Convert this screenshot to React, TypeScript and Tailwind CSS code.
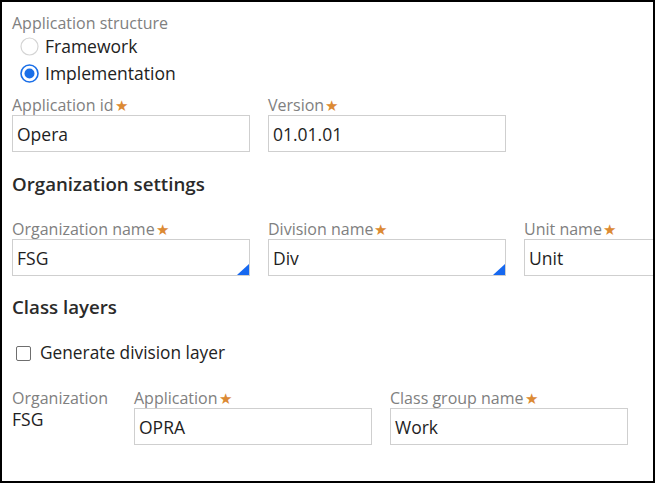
import React from "react";

const font = { fontFamily: '"Open Sans", "Noto Sans", sans-serif' };

function Label({ text, req = true }: { text: string; req?: boolean }) {
  return (
    <div className="text-[16px] leading-[20px] text-[#808080] whitespace-nowrap flex items-center pt-[1px]">
      {text}
      {req && <span className="text-[#dc8a34] text-[15px] leading-[20px] ml-[1px]">★</span>}
    </div>
  );
}

function Input({ value, tri = false }: { value: string; tri?: boolean }) {
  return (
    <div className="relative w-[238px] h-[37px] border border-[#cfcfcf] bg-white flex items-center pl-[4px] pt-[2px] text-[17.5px] text-[#1e1e1e] shrink-0">
      {value}
      {tri && (
        <svg className="absolute right-0 bottom-0" width="12" height="11" viewBox="0 0 12 11">
          <polygon points="12,0 12,11 0,11" fill="#1668f0" />
        </svg>
      )}
    </div>
  );
}

function Field({ label, value, tri = false }: { label: string; value: string; tri?: boolean }) {
  return (
    <div className="flex flex-col shrink-0">
      <Label text={label} />
      <Input value={value} tri={tri} />
    </div>
  );
}

function Radio({ checked }: { checked: boolean }) {
  return (
    <svg width="19" height="19" viewBox="0 0 19 19" className="shrink-0">
      {checked ? (
        <>
          <circle cx="9.5" cy="9.5" r="8.5" fill="white" stroke="#1a6fe8" strokeWidth="1.6" />
          <circle cx="9.5" cy="9.5" r="5" fill="#1a6fe8" />
        </>
      ) : (
        <circle cx="9.5" cy="9.5" r="8.5" fill="white" stroke="#d4d4d4" strokeWidth="1.2" />
      )}
    </svg>
  );
}

export default function App() {
  return (
    <div style={font} className="w-[655px] h-[483px] border-2 border-black bg-white overflow-hidden box-border">
      <div className="pl-[10px] pt-[11px] flex flex-col">
        <div className="text-[16px] leading-[20px] text-[#808080]">Application structure</div>
        <div className="flex items-center h-[27px] pl-[8px] gap-[6px] text-[17.5px] text-[#222]">
          <Radio checked={false} />
          <span>Framework</span>
        </div>
        <div className="flex items-center h-[27px] pl-[8px] gap-[6px] text-[17.5px] text-[#222]">
          <Radio checked={true} />
          <span>Implementation</span>
        </div>
        <div className="flex gap-[18px] mt-[7px]">
          <Field label="Application id" value="Opera" />
          <Field label="Version" value="01.01.01" />
        </div>
        <div className="mt-[20px] text-[18.7px] leading-[24px] font-semibold text-[#2a2a2a]">Organization settings</div>
        <div className="flex gap-[18px] mt-[22px]">
          <Field label="Organization name" value="FSG" tri />
          <Field label="Division name" value="Div" tri />
          <Field label="Unit name" value="Unit" />
        </div>
        <div className="mt-[19px] text-[18.7px] leading-[24px] font-semibold text-[#2a2a2a]">Class layers</div>
        <div className="flex items-center h-[24px] mt-[22px] pl-[4px] gap-[9px] text-[17.3px] text-[#222]">
          <div className="w-[15px] h-[15px] border border-[#6e6e6e] rounded-[2px] bg-white" />
          <span>Generate division layer</span>
        </div>
        <div className="flex mt-[22px]">
          <div className="w-[122px] flex flex-col">
            <div className="text-[16px] leading-[20px] text-[#808080] pt-[1px]">Organization</div>
            <div className="text-[17.5px] leading-[22px] text-[#1e1e1e]">FSG</div>
          </div>
          <div className="flex gap-[18px]">
            <Field label="Application" value="OPRA" />
            <Field label="Class group name" value="Work" />
          </div>
        </div>
      </div>
    </div>
  );
}
